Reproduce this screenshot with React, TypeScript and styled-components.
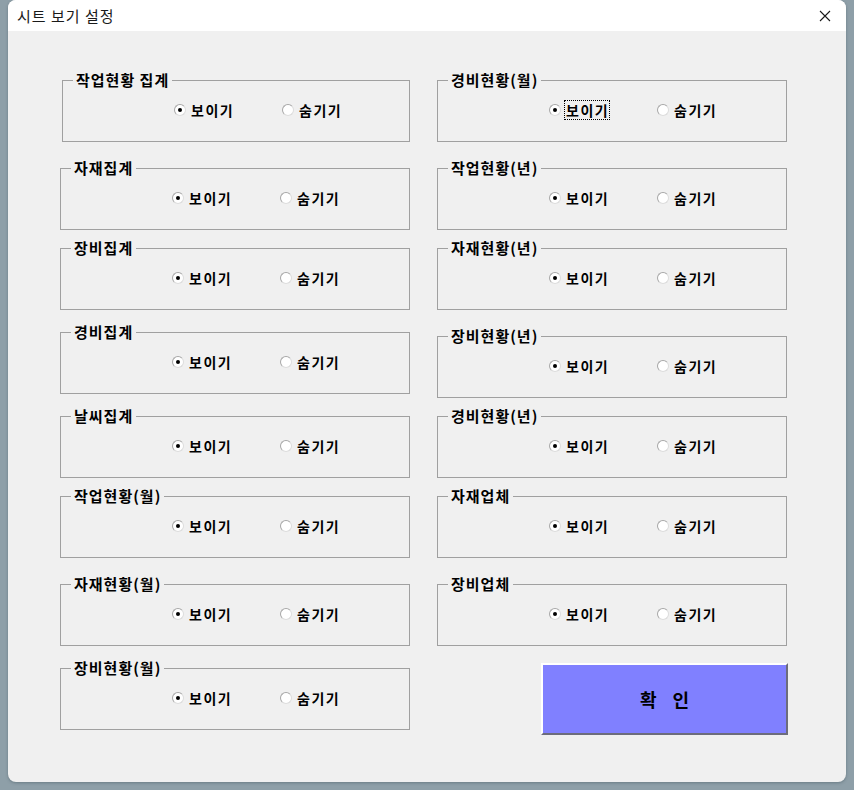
import React from 'react';
import styled, { createGlobalStyle } from 'styled-components';

const GlobalStyle = createGlobalStyle`
  html, body {
    margin: 0;
    padding: 0;
    background: #8e9fa8;
  }
  body {
    font-family: "Noto Sans CJK KR", "Noto Sans", sans-serif;
  }
`;

const Screen = styled.div`
  width: 854px;
  height: 790px;
  padding-left: 8px;
  box-sizing: border-box;
`;

const Window = styled.div`
  width: 838px;
  height: 782px;
  border-radius: 8px;
  overflow: hidden;
  background: #f0f0f0;
  display: flex;
  flex-direction: column;
  box-shadow: 0 1px 3px rgba(40, 60, 70, 0.35);
`;

const TitleBar = styled.div`
  height: 31px;
  flex: none;
  background: #ffffff;
  display: flex;
  align-items: center;
  justify-content: space-between;
  padding: 0 14px 0 9px;
`;

const TitleText = styled.span`
  font-size: 15px;
  letter-spacing: 1px;
  color: #1a1a1a;
  line-height: 1;
  margin-top: -1px;
`;

const CloseButton = styled.div`
  width: 14px;
  height: 14px;
  display: flex;
  align-items: center;
  justify-content: center;
`;

const Body = styled.div`
  flex: 1;
  display: flex;
  gap: 27px;
  padding: 0 0 0 52px;
`;

const Column = styled.div`
  width: 350px;
  display: flex;
  flex-direction: column;
`;

const Group = styled.div<{ $top: number; $indent?: number }>`
  position: relative;
  box-sizing: border-box;
  height: 62px;
  margin-top: ${p => p.$top}px;
  margin-left: ${p => p.$indent ?? 0}px;
  border: 1px solid #a0a0a0;
  display: flex;
  align-items: center;
  padding-left: 111px;
`;

const Legend = styled.span`
  position: absolute;
  top: -11px;
  left: 10px;
  padding: 0 3px;
  background: #f0f0f0;
  font-size: 15px;
  letter-spacing: 1px;
  font-weight: 700;
  line-height: 20px;
  color: #000;
  white-space: nowrap;
`;

const Option = styled.label<{ $wide?: boolean }>`
  display: flex;
  align-items: center;
  gap: 3px;
  width: ${p => (p.$wide ? 108 : 'auto')}px;
  font-size: 14px;
  letter-spacing: 1.5px;
  font-weight: 700;
  color: #000;
  line-height: 18px;
  margin-top: -2px;
`;

const RadioDot = styled.span<{ $checked?: boolean }>`
  position: relative;
  width: 12px;
  height: 12px;
  box-sizing: border-box;
  border-radius: 50%;
  border: 1px solid #a7a7a7;
  border-bottom-color: #dcdcdc;
  border-right-color: #dcdcdc;
  background: #ffffff;
  flex: none;

  &::after {
    content: '';
    display: ${p => (p.$checked ? 'block' : 'none')};
    position: absolute;
    left: 3px;
    top: 3px;
    width: 4px;
    height: 4px;
    border-radius: 50%;
    background: #000;
  }
`;

const OptionText = styled.span<{ $focused?: boolean }>`
  padding: 0 0 0 1px;
  border: 1px dotted ${p => (p.$focused ? '#000' : 'transparent')};
`;

const ConfirmButton = styled.button`
  margin-top: 17px;
  margin-left: 104px;
  width: 247px;
  height: 72px;
  box-sizing: border-box;
  background: #8080ff;
  border: none;
  border-top: 2px solid #ffffff;
  border-left: 2px solid #ffffff;
  border-right: 2px solid #6c6c7c;
  border-bottom: 2px solid #6c6c7c;
  font-family: "Noto Sans CJK KR", "Noto Sans", sans-serif;
  font-size: 18px;
  font-weight: 700;
  color: #000;
  white-space: pre;
  word-spacing: 12px;
  padding: 0;
`;

type Item = { title: string; top: number; indent?: number; focused?: boolean };

const leftItems: Item[] = [
  { title: '작업현황 집계', top: 49, indent: 2 },
  { title: '자재집계', top: 26 },
  { title: '장비집계', top: 18 },
  { title: '경비집계', top: 22 },
  { title: '날씨집계', top: 22 },
  { title: '작업현황(월)', top: 18 },
  { title: '자재현황(월)', top: 26 },
  { title: '장비현황(월)', top: 22 },
];

const rightItems: Item[] = [
  { title: '경비현황(월)', top: 49, focused: true },
  { title: '작업현황(년)', top: 26 },
  { title: '자재현황(년)', top: 18 },
  { title: '장비현황(년)', top: 26 },
  { title: '경비현황(년)', top: 18 },
  { title: '자재업체', top: 18 },
  { title: '장비업체', top: 26 },
];

const ShowHideGroup: React.FC<{ item: Item }> = ({ item }) => (
  <Group $top={item.top} $indent={item.indent}>
    <Legend>{item.title}</Legend>
    <Option $wide>
      <RadioDot $checked />
      <OptionText $focused={item.focused}>보이기</OptionText>
    </Option>
    <Option>
      <RadioDot />
      <OptionText>숨기기</OptionText>
    </Option>
  </Group>
);

export default function App() {
  return (
    <Screen>
      <GlobalStyle />
      <Window>
        <TitleBar>
          <TitleText>시트 보기 설정</TitleText>
          <CloseButton>
            <svg width="12" height="12" viewBox="0 0 12 12">
              <path d="M1 1 L11 11 M11 1 L1 11" stroke="#1a1a1a" strokeWidth="1.1" />
            </svg>
          </CloseButton>
        </TitleBar>
        <Body>
          <Column>
            {leftItems.map(item => (
              <ShowHideGroup key={item.title} item={item} />
            ))}
          </Column>
          <Column>
            {rightItems.map(item => (
              <ShowHideGroup key={item.title} item={item} />
            ))}
            <ConfirmButton>확 인</ConfirmButton>
          </Column>
        </Body>
      </Window>
    </Screen>
  );
}
